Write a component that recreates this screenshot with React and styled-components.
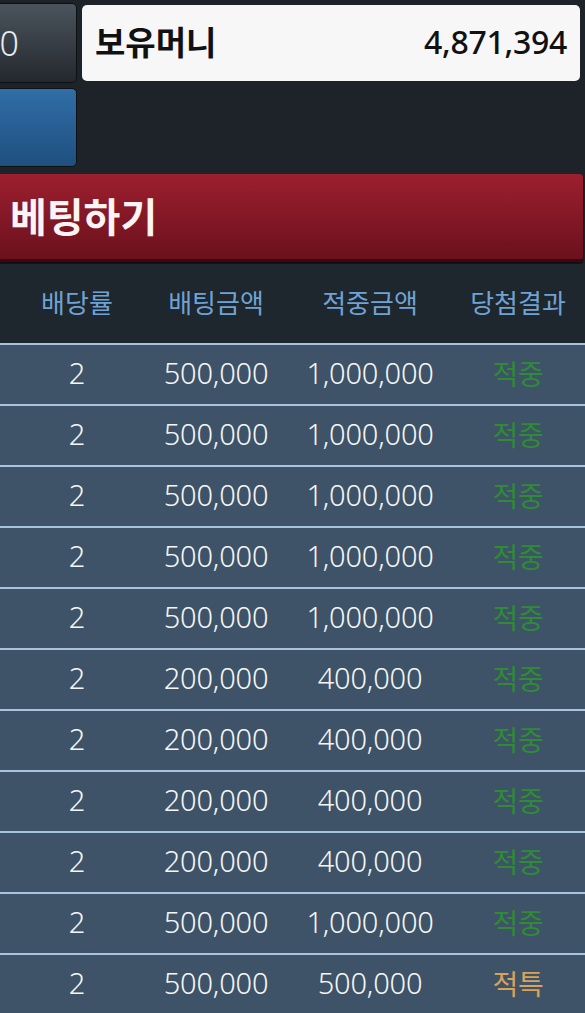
import styled, { createGlobalStyle } from 'styled-components';

const GlobalStyle = createGlobalStyle`
	html, body {
		margin: 0;
		padding: 0;
		background: #1d2329;
		overflow: hidden;
	}
	body {
		font-family: 'Noto Sans', 'Noto Sans CJK KR', sans-serif;
	}
`;

const rows = [
	{ rate: 2, bet: '500,000', win: '1,000,000', result: '적중' },
	{ rate: 2, bet: '500,000', win: '1,000,000', result: '적중' },
	{ rate: 2, bet: '500,000', win: '1,000,000', result: '적중' },
	{ rate: 2, bet: '500,000', win: '1,000,000', result: '적중' },
	{ rate: 2, bet: '500,000', win: '1,000,000', result: '적중' },
	{ rate: 2, bet: '200,000', win: '400,000', result: '적중' },
	{ rate: 2, bet: '200,000', win: '400,000', result: '적중' },
	{ rate: 2, bet: '200,000', win: '400,000', result: '적중' },
	{ rate: 2, bet: '200,000', win: '400,000', result: '적중' },
	{ rate: 2, bet: '500,000', win: '1,000,000', result: '적중' },
	{ rate: 2, bet: '500,000', win: '500,000', result: '적특' },
];

function App() {
	return (
		<Page>
			<GlobalStyle />
			<TopGrid>
				<SideButton variant='dark'>
					<span>10,000</span>
				</SideButton>
				<BalanceBox>
					<span>보유머니</span>
					<strong>4,871,394</strong>
				</BalanceBox>
				<SideButton variant='blue' inset={76}>
					<span>전액</span>
				</SideButton>
			</TopGrid>
			<BetHeader>베팅하기</BetHeader>
			<Table>
				<HeadRow>
					<span>배당률</span>
					<span>배팅금액</span>
					<span>적중금액</span>
					<span>당첨결과</span>
				</HeadRow>
				{rows.map((r, i) => (
					<Row key={i}>
						<span>{r.rate}</span>
						<span>{r.bet}</span>
						<span>{r.win}</span>
						<Result special={r.result === '적특'}>{r.result}</Result>
					</Row>
				))}
			</Table>
		</Page>
	);
}

export default App;

const Page = styled.div`
	width: 585px;
	height: 1013px;
	overflow: hidden;
	background: #1d2329;
`;

const TopGrid = styled.div`
	display: grid;
	grid-template-columns: 137px 1fr;
	grid-template-rows: 80px 79px;
	column-gap: 5px;
	row-gap: 5px;
	padding: 3px 5px 0 0;
	margin-left: -60px;
`;

const SideButton = styled.div`
	display: flex;
	align-items: center;
	justify-content: flex-end;
	padding-right: ${(p) => (p.inset ? p.inset : 57)}px;
	border: 1px solid #0e1114;
	border-radius: 5px;
	color: #e8ecef;
	font-size: 34px;
	font-weight: 300;
	background: ${(p) =>
		p.variant === 'blue'
			? 'linear-gradient(to bottom, #2f6ea6, #1f4f7f)'
			: 'linear-gradient(to bottom, #4b545d, #23282d)'};
	box-sizing: border-box;
	overflow: hidden;
`;

const BalanceBox = styled.div`
	display: flex;
	align-items: center;
	justify-content: space-between;
	margin: 2px 0;
	padding: 0 13px 4px 13px;
	background: #f7f7f8;
	border-radius: 5px;
	color: #111;
	font-size: 33px;

	span {
		font-weight: 700;
	}
	strong {
		font-weight: 500;
		font-size: 32px;
		letter-spacing: -0.3px;
	}
`;

const BetHeader = styled.div`
	display: flex;
	align-items: center;
	height: 88px;
	margin: 7px 2px 0 0;
	padding: 0 0 4px 10px;
	box-sizing: border-box;
	border-radius: 0 4px 4px 0;
	border-bottom: 3px solid #3e070d;
	background: linear-gradient(to bottom, #9d1f2e, #6b111d);
	color: #fbf3f4;
	font-size: 40px;
	font-weight: 700;
	box-shadow: 0 2px 2px rgba(0, 0, 0, 0.6);
`;

const Table = styled.div`
	margin-top: 2px;
`;

const HeadRow = styled.div`
	display: grid;
	grid-template-columns: 154px 124px 184px 112px;
	align-items: center;
	height: 79px;
	background: #1e262e;
	color: #6ea3d4;
	font-size: 26px;
	text-align: center;
	padding-bottom: 4px;
	box-sizing: border-box;
`;

const Row = styled.div`
	display: grid;
	grid-template-columns: 154px 124px 184px 112px;
	align-items: center;
	height: 61px;
	box-sizing: border-box;
	border-top: 2px solid #a8c3dc;
	background: #3e5367;
	color: #f4f6f8;
	font-size: 29px;
	font-weight: 300;
	text-align: center;
	white-space: nowrap;
	padding-bottom: 4px;
	letter-spacing: -0.2px;
`;

const Result = styled.span`
	color: ${(p) => (p.special ? '#d9a25a' : '#2f8b35')};
	font-size: 28px;
	font-weight: 400;
`;
